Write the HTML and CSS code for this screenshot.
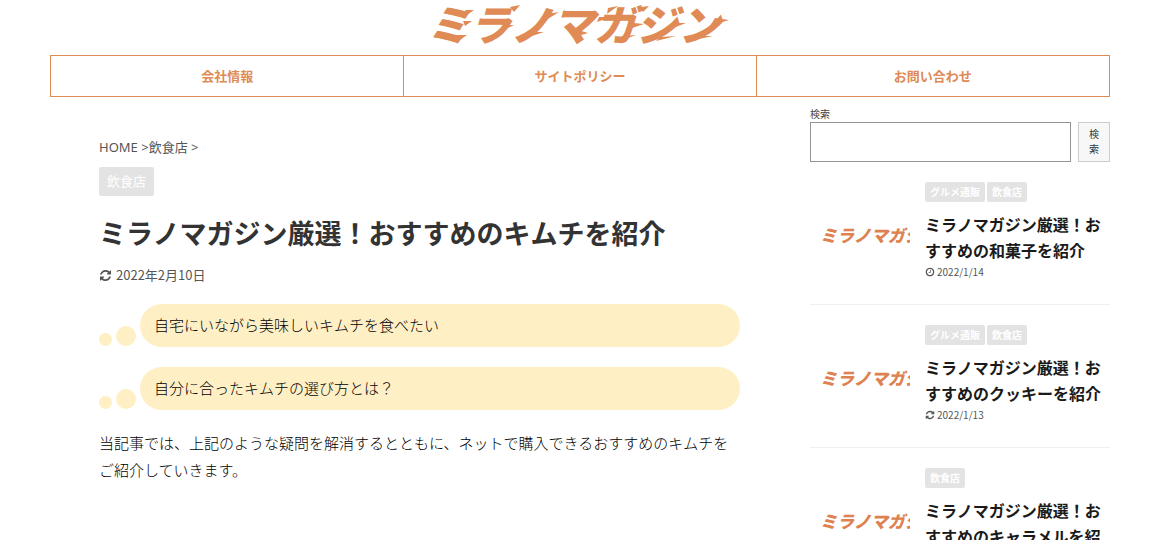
FILE: index.html
```html
<!DOCTYPE html>
<html lang="ja">
<head>
    <meta charset="UTF-8">
    <meta name="viewport" content="width=device-width, initial-scale=1.0">
    <title>ミラノマガジン厳選！おすすめのキムチを紹介</title>
    <link rel="stylesheet" href="styles.css">
</head>
<body>
    <svg class="sprite" aria-hidden="true">
        <symbol id="icon-refresh" viewBox="0 0 1792 1792">
            <path d="M1639 1056q0 5-1 7-64 268-268 434.5t-478 166.5q-146 0-282.5-55t-243.5-157l-129 129q-19 19-45 19t-45-19-19-45v-448q0-26 19-45t45-19h448q26 0 45 19t19 45-19 45l-137 137q71 66 161 102t187 36q134 0 250-65t186-179q11-17 53-117 8-23 30-23h192q13 0 22.5 9.5t9.5 22.5zm25-800v448q0 26-19 45t-45 19h-448q-26 0-45-19t-19-45 19-45l138-138q-148-137-349-137-134 0-250 65t-186 179q-11 17-53 117-8 23-30 23h-199q-13 0-22.5-9.5t-9.5-22.5v-7q65-268 270-434.5t480-166.5q146 0 284 55.5t245 156.5l130-129q19-19 45-19t45 19 19 45z"/>
        </symbol>
        <symbol id="icon-clock" viewBox="0 0 1792 1792">
            <path d="M1024 544v448q0 14-9 23t-23 9h-320q-14 0-23-9t-9-23v-64q0-14 9-23t23-9h224v-352q0-14 9-23t23-9h64q14 0 23 9t9 23zm416 352q0-148-73-273t-198-198-273-73-273 73-198 198-73 273 73 273 198 198 273 73 273-73 198-198 73-273zm224 0q0 209-103 385.5t-279.5 279.5-385.5 103-385.5-103-279.5-279.5-103-385.5 103-385.5 279.5-279.5 385.5-103 385.5 103 279.5 279.5 103 385.5z"/>
        </symbol>
    </svg>

    <header class="header">
        <a class="logo" href="#">
            <svg width="300" height="50" viewBox="0 0 300 50">
                <text x="-3" y="41">ミラノマガジン</text>
                <!-- speed streaks on the ends of the strokes -->
                <path d="M44 10l-9 0 2 5zM42 21l-9 0 2 5zM37 35l-10 0 3 5zM90 5l-10 2 4 5zM84 25l-10 0-2 6zM129 12l-12 2-1 6zM114 32l-12 0-3 5zM188 6l-10 2-1 6zM181 17l-12 0-2 5zM158 33l-10-3 0 6zM219 6l-8 1 2 5zM214 24l-10-1-2 5zM206 35l-12 1-4 5zM256 23l-13 0-5 7zM246 36l-16 1-4 4zM299 20l-14-2-5 8zM283 36l-18 0-6 5z"/>
            </svg>
        </a>
    </header>

    <nav class="nav">
        <a href="#">会社情報</a>
        <a href="#">サイトポリシー</a>
        <a href="#">お問い合わせ</a>
    </nav>

    <div class="content">
        <main class="main">
            <div class="breadcrumb"><a href="#">HOME</a> &gt;<a href="#">飲食店</a> &gt;</div>
            <a class="category" href="#">飲食店</a>
            <h1 class="title">ミラノマガジン厳選！おすすめのキムチを紹介</h1>
            <p class="date"><svg class="icon"><use href="#icon-refresh"/></svg>2022年2月10日</p>

            <div class="think">
                <span class="dot dot-small"></span>
                <span class="dot"></span>
                <p class="bubble">自宅にいながら美味しいキムチを食べたい</p>
            </div>
            <div class="think">
                <span class="dot dot-small"></span>
                <span class="dot"></span>
                <p class="bubble">自分に合ったキムチの選び方とは？</p>
            </div>

            <p class="text">当記事では、上記のような疑問を解消するとともに、ネットで購入できるおすすめのキムチをご紹介していきます。</p>
        </main>

        <aside class="sidebar">
            <form class="search">
                <label for="search-input">検索</label>
                <div class="search-row">
                    <input type="search" id="search-input" name="s">
                    <button type="submit">検索</button>
                </div>
            </form>

            <article class="post">
                <a class="thumb" href="#">ミラノマガジ</a>
                <div class="post-body">
                    <div class="tags"><a href="#">グルメ通販</a><a href="#">飲食店</a></div>
                    <h2><a href="#">ミラノマガジン厳選！おすすめの和菓子を紹介</a></h2>
                    <p class="post-date"><svg class="icon"><use href="#icon-clock"/></svg>2022/1/14</p>
                </div>
            </article>
            <article class="post">
                <a class="thumb" href="#">ミラノマガジ</a>
                <div class="post-body">
                    <div class="tags"><a href="#">グルメ通販</a><a href="#">飲食店</a></div>
                    <h2><a href="#">ミラノマガジン厳選！おすすめのクッキーを紹介</a></h2>
                    <p class="post-date"><svg class="icon"><use href="#icon-refresh"/></svg>2022/1/13</p>
                </div>
            </article>
            <article class="post">
                <a class="thumb" href="#">ミラノマガジ</a>
                <div class="post-body">
                    <div class="tags"><a href="#">飲食店</a></div>
                    <h2><a href="#">ミラノマガジン厳選！おすすめのキャラメルを紹介</a></h2>
                </div>
            </article>
        </aside>
    </div>
</body>
</html>
```
FILE: styles.css
```css
* {
    box-sizing: border-box;
    margin: 0;
    padding: 0;
}
body {
    padding: 0 40px 0 50px;
    background-color: #fff;
    color: #000;
    font-family: "Noto Sans", "Noto Sans CJK JP", sans-serif;
    font-size: 15px;
    line-height: 27px;
}
a {
    color: inherit;
    text-decoration: none;
}
.sprite {
    display: none;
}
.icon {
    width: 1em;
    height: 1em;
    fill: currentColor;
    flex: none;
}

/* header */
.header {
    display: flex;
    justify-content: center;
    height: 55px;
}
.logo svg {
    display: block;
    overflow: visible;
    fill: #e08a56;
}
.logo text {
    font-family: "Noto Sans CJK JP", sans-serif;
    font-size: 42px;
    font-style: italic;
    font-weight: 900;
}
.nav {
    display: grid;
    grid-template-columns: 33.3% 33.3% 1fr;
    border: 1px solid #e08a56;
}
.nav a {
    color: #e08a56;
    font-size: 13px;
    font-weight: bold;
    line-height: 40px;
    text-align: center;
}
.nav a + a {
    border-left: 1px solid #e08a56;
}

/* article */
.content {
    display: flex;
    gap: 70px;
}
.main {
    flex: 1;
    min-width: 0;
    padding: 40px 0 40px 49px;
}
.breadcrumb {
    color: #555;
    font-size: 13px;
    line-height: 20px;
    margin-bottom: 10px;
}
.category {
    display: inline-block;
    padding: 0 8px;
    border-radius: 2px;
    background-color: #e3e3e3;
    color: #fff;
    font-size: 13px;
    line-height: 29px;
    vertical-align: top;
}
.title {
    margin-top: 20px;
    color: #333;
    font-size: 27px;
    line-height: 36px;
}
.date {
    display: flex;
    align-items: center;
    gap: 4px;
    margin: 13px 0 19px;
    color: #555;
    font-family: "Noto Sans CJK JP", sans-serif;
    font-size: 13px;
    line-height: 20px;
}
.think {
    display: flex;
    align-items: flex-end;
    gap: 4px;
    margin-bottom: 20px;
}
.dot {
    width: 20px;
    height: 20px;
    margin-bottom: 1px;
    border-radius: 50%;
    background-color: #ffefc5;
}
.dot-small {
    width: 13px;
    height: 13px;
}
.bubble {
    flex: 1;
    padding: 8px 14px;
    border-radius: 22px;
    background-color: #ffefc5;
}
.bubble,
.text {
    font-weight: 300;
}

/* sidebar */
.sidebar {
    width: 300px;
    flex: none;
    padding-top: 10px;
}
.search {
    color: #444;
    font-size: 10px;
    line-height: 15px;
}
.search label {
    display: block;
}
.search-row {
    display: flex;
    gap: 7px;
}
.search input {
    flex: 1;
    min-width: 0;
    height: 40px;
    padding: 0 8px;
    border: 1px solid #949494;
    background-color: #fff;
    appearance: none;
}
.search button {
    width: 32px;
    padding: 0 9px;
    border: 1px solid #ccc;
    background-color: #f7f7f7;
    color: #32373c;
    font: inherit;
    cursor: pointer;
}
.post {
    display: flex;
    gap: 15px;
    padding: 20px 0 24px;
    border-bottom: 1px solid #f0f0f0;
}
.thumb {
    width: 100px;
    height: 98px;
    flex: none;
    padding: 4px 0 0 10px;
    overflow: hidden;
    color: #dd8250;
    font-family: "Noto Sans CJK JP", sans-serif;
    font-size: 17px;
    font-style: italic;
    font-weight: 900;
    line-height: 98px;
    white-space: nowrap;
}
.post-body {
    flex: 1;
    min-width: 0;
}
.tags {
    display: flex;
    gap: 2px;
    margin-bottom: 10px;
}
.tags a {
    padding: 0 5px;
    border-radius: 2px;
    background-color: #e3e3e3;
    color: #fff;
    font-size: 10px;
    font-weight: bold;
    line-height: 20px;
}
.post h2 {
    color: #1a1a1a;
    font-size: 16px;
    line-height: 26px;
}
.post-date {
    display: flex;
    align-items: center;
    gap: 2px;
    color: #555;
    font-family: "Noto Sans CJK JP", sans-serif;
    font-size: 10px;
    line-height: 16px;
}
```
